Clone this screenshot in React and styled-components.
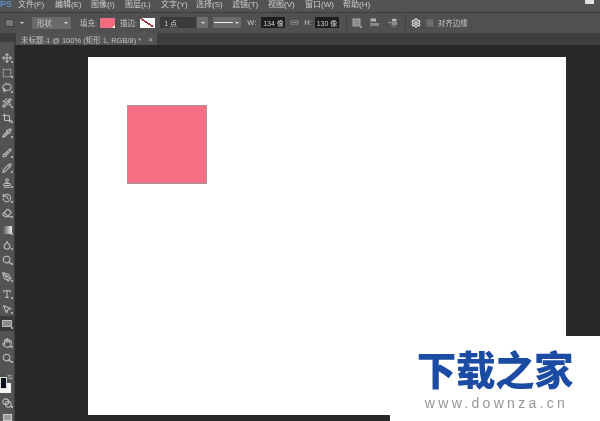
import React from 'react'
import styled, { createGlobalStyle } from 'styled-components'
import {
  Brush, Crop, Droplet, Eraser, Hand, History, Lasso, Link2, Move, PenTool, Pencil, Pipette,
  Search, Settings, SquareDashed, Stamp, Type, Wand2, MousePointer2, ArrowLeftRight, Blend,
} from 'lucide-react'

const Global = createGlobalStyle`
  html, body { margin: 0; padding: 0; background: #282828; }
`

const Root = styled.div`
  position: relative;
  width: 600px;
  height: 421px;
  overflow: hidden;
  display: flex;
  flex-direction: column;
  background: #282828;
  font-family: "Liberation Sans", "Noto Sans CJK SC", sans-serif;
  color: #d8d8d8;
  filter: blur(0.3px);
`

const MenuBar = styled.div`
  height: 12px;
  flex: none;
  display: flex;
  align-items: flex-start;
  background: #535353;
  position: relative;
`

const Logo = styled.span`
  width: 18px;
  flex: none;
  font-size: 9px;
  font-weight: bold;
  line-height: 8px;
  color: #5d8fc4;
`

const MenuItem = styled.span`
  width: ${p => p.$w}px;
  flex: none;
  font-size: 8px;
  line-height: 9px;
  white-space: nowrap;
  color: #cfcfcf;
`

const WindowBtn = styled.span`
  position: absolute;
  right: 6px;
  top: 0;
  width: 9px;
  height: 4px;
  background: #e2e2e2;
`

const OptionsBar = styled.div`
  height: 21px;
  flex: none;
  padding-bottom: 1px;
  box-sizing: border-box;
  display: flex;
  align-items: center;
  background: #505050;
  border-top: 1px solid #3c3c3c;
  font-size: 7.5px;
  color: #c8c8c8;
`

const ToolPreview = styled.span`
  width: 9px;
  height: 8px;
  margin-left: 5px;
  background: #777;
  border: 1px solid #3e3e3e;
  box-sizing: border-box;
`

const Caret = styled.span`
  width: 0;
  height: 0;
  margin: ${p => p.$m || '0 0 0 6px'};
  border-left: 2px solid transparent;
  border-right: 2px solid transparent;
  border-top: 2px solid #ddd;
`

const ModeSelect = styled.div`
  width: 39px;
  height: 12px;
  margin-left: 8px;
  padding: 0 3px 0 5px;
  box-sizing: border-box;
  display: flex;
  align-items: center;
  justify-content: space-between;
  background: #6a6a6a;
  border-radius: 1px;
`

const Label = styled.span`
  margin-left: ${p => p.$m}px;
  white-space: nowrap;
  flex: none;
`

const Swatch = styled.span`
  position: relative;
  width: 15px;
  height: 10px;
  margin-left: 3px;
  flex: none;
  background: ${p => p.$none
    ? 'linear-gradient(to top right, #fff 45%, #9c3a40 45%, #9c3a40 55%, #fff 55%)'
    : '#f26b7f'};
  &::after {
    content: '';
    position: absolute;
    right: 0;
    bottom: 0;
    border-left: 3px solid transparent;
    border-bottom: 3px solid #fff;
  }
`

const DarkField = styled.span`
  width: ${p => p.$w}px;
  height: 11px;
  margin-left: ${p => p.$m}px;
  padding-left: 2px;
  box-sizing: border-box;
  flex: none;
  display: flex;
  align-items: center;
  background: ${p => p.$bg || '#1d1d1d'};
  color: #d2d2d2;
  white-space: nowrap;
  font-size: 7px;
`

const SmallBtn = styled.span`
  width: 11px;
  height: 11px;
  margin-left: 1px;
  flex: none;
  display: flex;
  align-items: center;
  justify-content: center;
  background: #6e6e6e;
`

const LineSelect = styled.span`
  width: 28px;
  height: 11px;
  margin-left: 5px;
  padding: 0 2px 0 1px;
  box-sizing: border-box;
  flex: none;
  display: flex;
  align-items: center;
  background: #6a6a6a;
  &::before {
    content: '';
    flex: 1;
    height: 1px;
    background: #f2f2f2;
  }
`

const Separator = styled.span`
  width: 1px;
  height: 16px;
  margin-left: ${p => p.$m}px;
  flex: none;
  background: #414141;
`

const OptionIcon = styled.span`
  width: 10px;
  height: 10px;
  margin-left: ${p => p.$m}px;
  flex: none;
  display: flex;
  align-items: center;
  justify-content: center;
  color: ${p => p.$c || '#a9a9a9'};
`

const Check = styled.span`
  width: 8px;
  height: 8px;
  margin-left: ${p => p.$m}px;
  flex: none;
  background: #6d6d6d;
  border: 1px solid #5f5f5f;
  box-sizing: border-box;
`

const Main = styled.div`
  flex: 1;
  min-height: 0;
  display: flex;
  background: #3e3e3e;
`

const ToolBar = styled.div`
  width: 15px;
  flex: none;
  padding-top: 8px;
  box-sizing: border-box;
  display: flex;
  flex-direction: column;
  align-items: center;
  background: #535353;
  border-right: 1px solid #3e3e3e;
  margin-top: 9px;
`

const Tool = styled.span`
  position: relative;
  width: 15px;
  height: 15px;
  flex: none;
  margin-top: ${p => p.$gap || 0}px;
  display: flex;
  align-items: center;
  justify-content: center;
  color: #bdbdbd;
  background: ${p => p.$active ? '#393939' : 'transparent'};
  &::after {
    content: '';
    position: absolute;
    right: 2px;
    bottom: 2px;
    width: 2px;
    height: 2px;
    background: #a8a8a8;
  }
`

const ShapeIcon = styled.span`
  width: 10px;
  height: 7px;
  background: #8a8a8a;
  border: 1px solid #bbb;
  box-sizing: border-box;
`

const GradientIcon = styled.span`
  width: 10px;
  height: 8px;
  background: linear-gradient(to right, #444, #eee);
`

const ScreenIcon = styled.span`
  width: 9px;
  height: 7px;
  background: #999;
  border: 1px solid #ccc;
  box-sizing: border-box;
`

const Colors = styled.div`
  position: relative;
  width: 14px;
  height: 30px;
  flex: none;
  align-self: flex-start;
`

const Back = styled.span`
  position: absolute;
  left: 0;
  top: 18px;
  width: 11px;
  height: 10px;
  background: #f4f4f4;
`

const Front = styled.span`
  position: absolute;
  left: 0;
  top: 12px;
  width: 5px;
  height: 10px;
  background: #0b0f1c;
  border: 1px solid #ddd;
`

const Swap = styled.span`
  position: absolute;
  left: 7px;
  top: 1px;
  color: #c6c6c6;
`

const Doc = styled.div`
  flex: 1;
  min-width: 0;
  display: flex;
  flex-direction: column;
`

const TabBar = styled.div`
  height: 12px;
  flex: none;
  display: flex;
  background: #3e3e3e;
`

const Tab = styled.div`
  width: 141px;
  margin-left: 1px;
  padding: 0 4px 0 5px;
  box-sizing: border-box;
  display: flex;
  justify-content: space-between;
  align-items: center;
  background: #535353;
  color: #c4c4c4;
  font-size: 7.5px;
  white-space: nowrap;
`

const Workspace = styled.div`
  flex: 1;
  min-height: 0;
  padding: 12px 0 0 73px;
  background: #282828;
`

const Canvas = styled.div`
  width: 478px;
  height: 358px;
  padding: 48px 0 0 39px;
  box-sizing: border-box;
  background: #fff;
`

const Rect = styled.div`
  width: 80px;
  height: 79px;
  box-sizing: border-box;
  background: #f46f84;
  border: 1px solid #a8959a;
`

const Watermark = styled.div`
  position: absolute;
  right: 0;
  bottom: 0;
  width: 210px;
  height: 85px;
  box-sizing: border-box;
  padding-top: 12px;
  background: #fff;
  display: flex;
  flex-direction: column;
  align-items: center;
`

const Brand = styled.div`
  font-family: "Noto Sans CJK SC", sans-serif;
  font-weight: 900;
  font-size: 39.5px;
  line-height: 40px;
  letter-spacing: -0.4px;
  color: #1b4ba3;
`

const Site = styled.div`
  font-family: "Liberation Sans", sans-serif;
  font-size: 14px;
  line-height: 15px;
  letter-spacing: 3.3px;
  margin-top: 8px;
  margin-left: 3px;
  color: #959595;
`

const icon = { size: 10, strokeWidth: 2.6 }

const tools = [
  [Move], [SquareDashed], [Lasso], [Wand2], [Crop], [Pipette],
  [Brush, 5], [Pencil], [Stamp], [History], [Eraser],
  [GradientIcon, 2], [Droplet], [Search], [PenTool, 2], [Type, 2], [MousePointer2],
]

const menus = [
  ['文件(F)', 37], ['编辑(E)', 36], ['图像(I)', 34], ['图层(L)', 36], ['文字(Y)', 35],
  ['选择(S)', 36], ['滤镜(T)', 36], ['视图(V)', 37], ['窗口(W)', 38], ['帮助(H)', 30],
]

const CombineIcon = () => (
  <svg width="10" height="10" viewBox="0 0 10 10">
    <rect x="1" y="1" width="7" height="7" fill="#8c8c8c" stroke="#a8a8a8" />
    <rect x="8" y="8" width="2" height="2" fill="#9a9a9a" />
  </svg>
)

const AlignIcon = () => (
  <svg width="10" height="10" viewBox="0 0 10 10">
    <rect x="1" y="0.5" width="5" height="3" fill="#b5b5b5" />
    <rect x="1" y="5" width="8" height="3" fill="#8c8c8c" />
    <rect x="0" y="0" width="1" height="9" fill="#777" />
  </svg>
)

const ArrangeIcon = () => (
  <svg width="12" height="10" viewBox="0 0 12 10">
    <rect x="0" y="4" width="3" height="1" fill="#b5b5b5" />
    <rect x="5" y="0" width="5" height="3" fill="#bdbdbd" />
    <rect x="4" y="3.5" width="7" height="4" fill="#8c8c8c" />
    <rect x="5" y="8" width="5" height="2" fill="#707070" />
  </svg>
)

export default function App() {
  return (
    <Root>
      <Global />
      <MenuBar>
        <Logo>PS</Logo>
        {menus.map(([name, w]) => <MenuItem key={name} $w={w}>{name}</MenuItem>)}
        <WindowBtn />
      </MenuBar>
      <OptionsBar>
        <ToolPreview />
        <Caret />
        <ModeSelect>形状<Caret $m="0" /></ModeSelect>
        <Label $m={9}>填充:</Label>
        <Swatch />
        <Label $m={5}>描边:</Label>
        <Swatch $none />
        <DarkField $w={36} $m={5} $bg="#3a3a3a">&nbsp;1 点</DarkField>
        <SmallBtn><Caret $m="0" /></SmallBtn>
        <LineSelect><Caret $m="0 0 0 2px" /></LineSelect>
        <Label $m={6}>W:</Label>
        <DarkField $w={24} $m={5}>134 像</DarkField>
        <OptionIcon $m={4}><Link2 size={9} /></OptionIcon>
        <Label $m={5}>H:</Label>
        <DarkField $w={24} $m={3}>130 像</DarkField>
        <Separator $m={7} />
        <OptionIcon $m={5}><CombineIcon /></OptionIcon>
        <OptionIcon $m={8}><AlignIcon /></OptionIcon>
        <OptionIcon $m={8}><ArrangeIcon /></OptionIcon>
        <Separator $m={7} />
        <OptionIcon $m={5} $c="#dcdcdc"><Settings size={10} strokeWidth={3} /></OptionIcon>
        <Check $m={5} />
        <Label $m={4}>对齐边缘</Label>
      </OptionsBar>
      <Main>
        <ToolBar>
          {tools.map(([Icon, gap], i) => (
            <Tool key={i} $gap={gap}>
              {Icon === GradientIcon ? <GradientIcon /> : <Icon {...icon} />}
            </Tool>
          ))}
          <Tool $active><ShapeIcon /></Tool>
          <Tool $gap={4}><Hand {...icon} /></Tool>
          <Tool><Search {...icon} /></Tool>
          <Colors>
            <Swap><ArrowLeftRight size={6} strokeWidth={2.6} /></Swap>
            <Back />
            <Front />
          </Colors>
          <Tool><Blend {...icon} /></Tool>
          <Tool><ScreenIcon /></Tool>
        </ToolBar>
        <Doc>
          <TabBar>
            <Tab><span>未标题-1 @ 100% (矩形 1, RGB/8) *</span><span>×</span></Tab>
          </TabBar>
          <Workspace>
            <Canvas><Rect /></Canvas>
          </Workspace>
        </Doc>
      </Main>
      <Watermark>
        <Brand>下载之家</Brand>
        <Site>www.downza.cn</Site>
      </Watermark>
    </Root>
  )
}
